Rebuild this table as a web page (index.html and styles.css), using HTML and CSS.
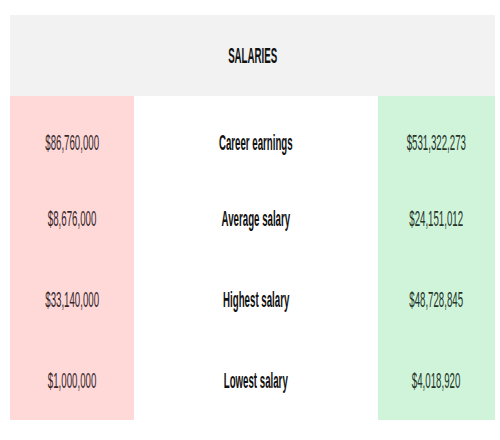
FILE: index.html
```html
<!DOCTYPE html>
<html>
<head>
<meta charset="utf-8">
<link rel="stylesheet" href="styles.css">
</head>
<body>
<div class="panel">
  <div class="header"><span class="txt bold">SALARIES</span></div>
  <div class="table">
    <div class="cell red first"><span class="txt">$86,760,000</span></div>
    <div class="cell label first"><span class="txt bold">Career earnings</span></div>
    <div class="cell green first"><span class="txt">$531,322,273</span></div>

    <div class="cell red"><span class="txt">$8,676,000</span></div>
    <div class="cell label"><span class="txt bold">Average salary</span></div>
    <div class="cell green"><span class="txt">$24,151,012</span></div>

    <div class="cell red"><span class="txt">$33,140,000</span></div>
    <div class="cell label"><span class="txt bold">Highest salary</span></div>
    <div class="cell green"><span class="txt">$48,728,845</span></div>

    <div class="cell red"><span class="txt">$1,000,000</span></div>
    <div class="cell label"><span class="txt bold">Lowest salary</span></div>
    <div class="cell green"><span class="txt">$4,018,920</span></div>
  </div>
</div>
</body>
</html>
```
FILE: styles.css
```css
html, body {
  margin: 0;
  padding: 0;
  background: #ffffff;
}
body {
  width: 500px;
  height: 440px;
  font-family: "Liberation Sans", Arial, sans-serif;
  font-size: 22px;
  color: #333333;
}
.panel {
  padding: 15px 5px 0 10px;
}
.header {
  height: 81px;
  background: #f2f2f2;
  display: flex;
  align-items: center;
  justify-content: center;
  color: #111111;
}
.table {
  display: grid;
  grid-template-columns: 124px 1fr 117px;
  grid-auto-rows: 81px;
}
.cell {
  display: flex;
  align-items: center;
  justify-content: center;
  padding-top: 2px;
  box-sizing: border-box;
  white-space: nowrap;
}
.cell.first {
  padding-top: 12px;
}
.red {
  background: #ffd8d8;
  color: #35272a;
}
.green {
  background: #cff4da;
  color: #25352a;
}
.label {
  color: #111111;
}
.txt {
  display: inline-block;
  transform: scaleX(0.44);
  transform-origin: center;
  line-height: 1;
}
.bold {
  font-weight: bold;
}
```
